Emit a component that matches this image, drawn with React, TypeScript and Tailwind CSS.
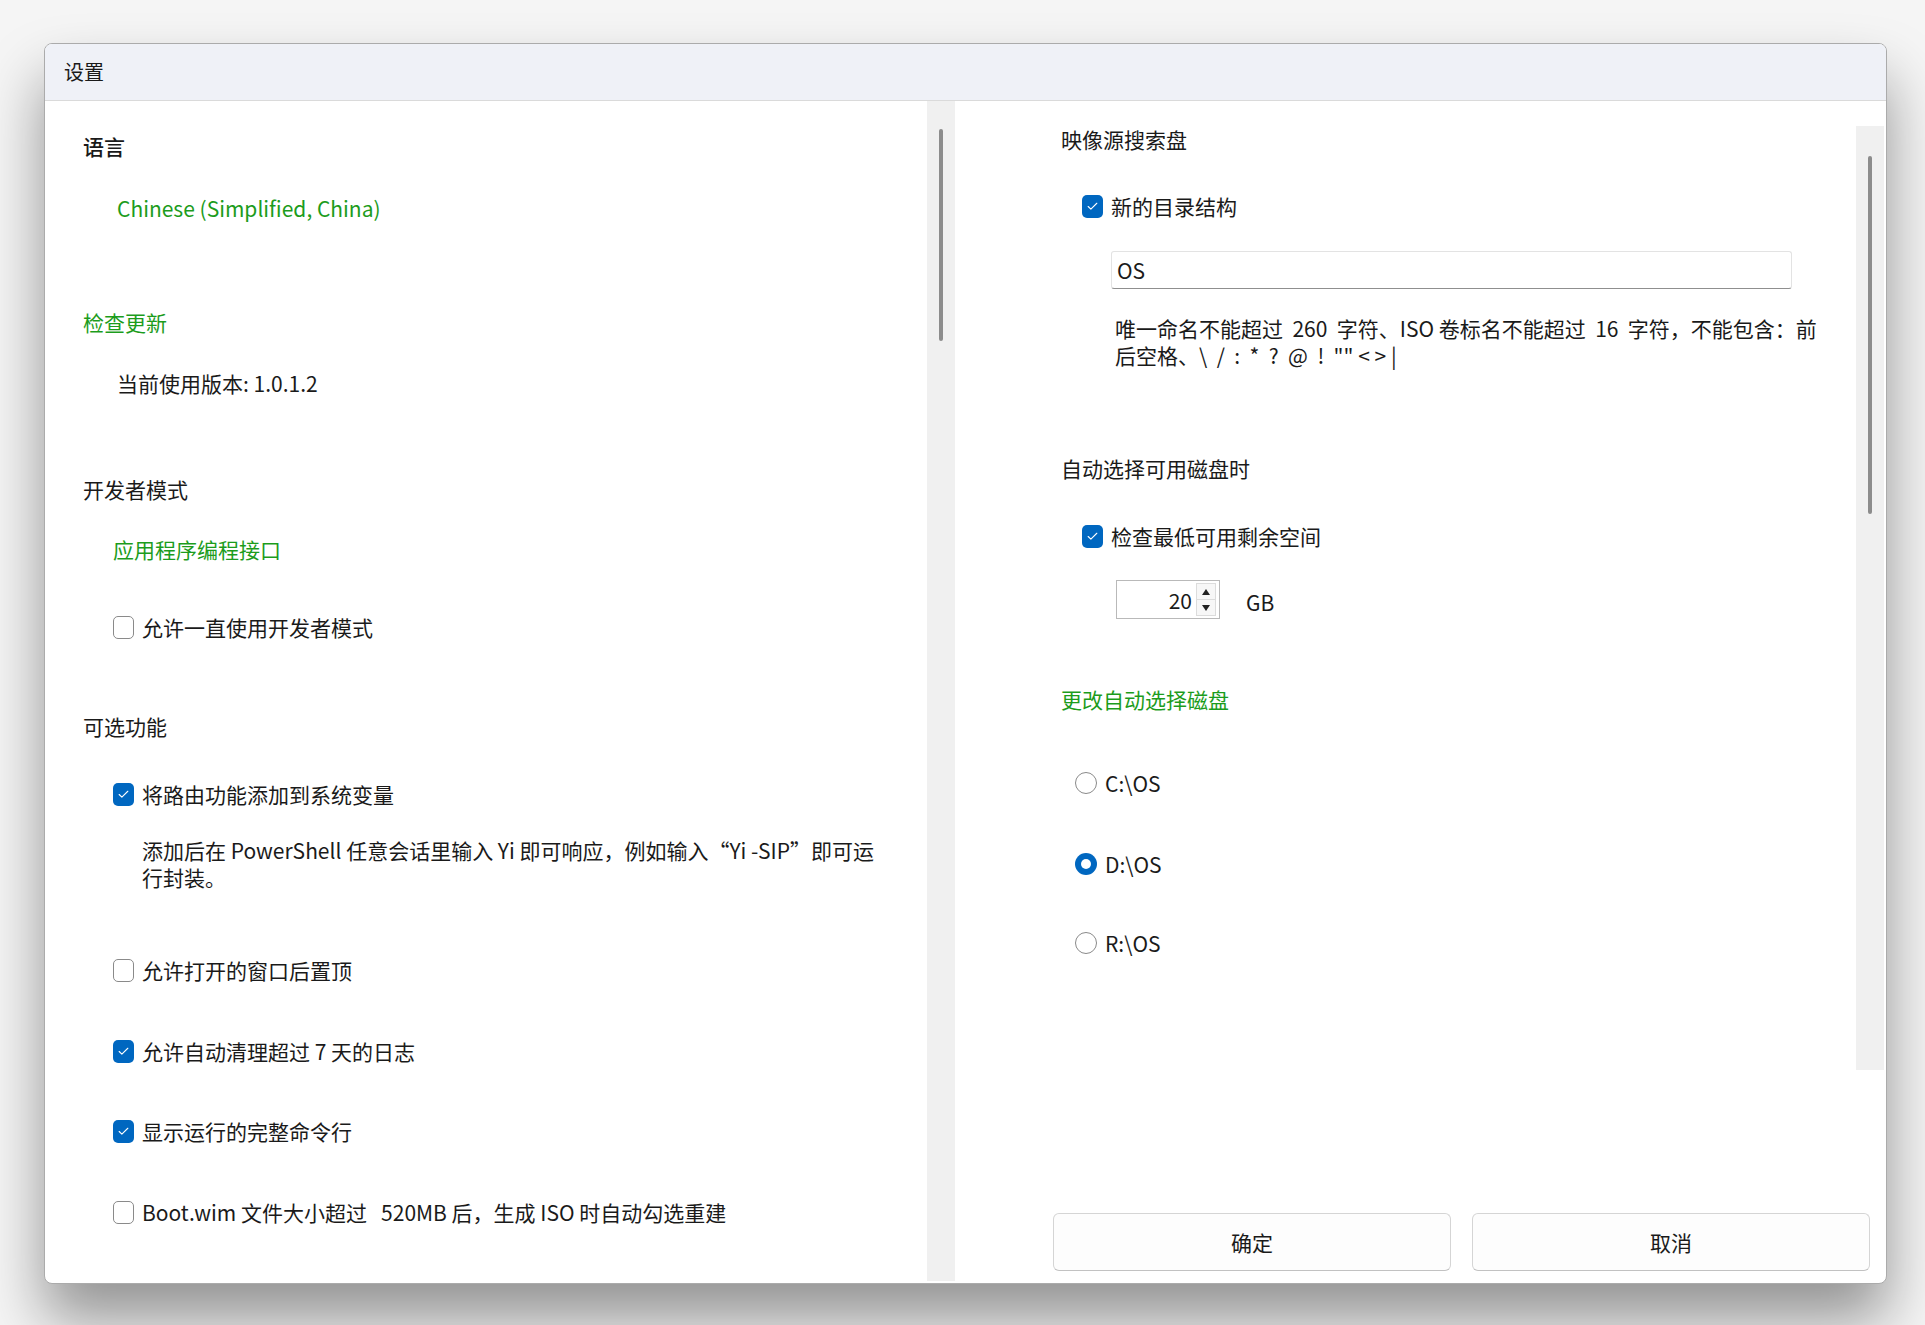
import { Check } from "lucide-react";

const font = { fontFamily: '"Noto Sans CJK SC", "Noto Sans", sans-serif' };

function CheckBox({ checked }: { checked: boolean }) {
  return checked ? (
    <span className="w-[21px] h-[23px] rounded-[5px] bg-[#0067c0] flex items-center justify-center shrink-0">
      <Check className="w-[13px] h-[13px] text-white" strokeWidth={2} />
    </span>
  ) : (
    <span className="w-[21px] h-[23px] rounded-[5px] border-[1.5px] border-[#8a8a8a] bg-white shrink-0" />
  );
}

function CheckRow({ checked, label, className }: { checked: boolean; label: string; className: string }) {
  return (
    <div className={`flex items-center gap-[8px] h-[28px] ${className}`}>
      <CheckBox checked={checked} />
      <span className="whitespace-pre">{label}</span>
    </div>
  );
}

function Radio({ checked, label, className }: { checked: boolean; label: string; className: string }) {
  return (
    <div className={`flex items-center gap-[8px] h-[28px] ${className}`}>
      {checked ? (
        <span className="w-[22px] h-[22px] rounded-full bg-[#0067c0] flex items-center justify-center">
          <span className="w-[10px] h-[10px] rounded-full bg-white" />
        </span>
      ) : (
        <span className="w-[22px] h-[22px] rounded-full border-[1.5px] border-[#8a8a8a] bg-white" />
      )}
      <span>{label}</span>
    </div>
  );
}

export default function App() {
  return (
    <div
      className="w-[1925px] h-[1325px] bg-[#f5f5f5] pl-[44px] pt-[43px] text-[21px] text-[#1a1a1a] leading-[28px]"
      style={font}
    >
      <div className="w-[1843px] h-[1241px] bg-white border border-[#ababab] rounded-[8px] overflow-hidden flex flex-col shadow-[0_36px_60px_rgba(0,0,0,0.4)]">
        <div className="h-[57px] bg-[#eff1f7] border-b border-[#dadada] flex items-center pl-[19px] text-[20px] shrink-0">
          设置
        </div>

        <div className="flex flex-1">
          {/* left column */}
          <div className="w-[882px] pl-[38px] flex flex-col">
            <div className="mt-[31px] h-[28px] font-medium">语言</div>
            <div className="mt-[34px] h-[28px] pl-[34px] text-[#1c9c1c]">Chinese (Simplified, China)</div>
            <div className="mt-[86px] h-[28px] text-[#1c9c1c]">检查更新</div>
            <div className="mt-[33px] h-[28px] pl-[34px]">当前使用版本: 1.0.1.2</div>
            <div className="mt-[78px] h-[28px]">开发者模式</div>
            <div className="mt-[32px] h-[28px] pl-[30px] text-[#1c9c1c]">应用程序编程接口</div>
            <CheckRow className="mt-[50px] pl-[30px]" checked={false} label="允许一直使用开发者模式" />
            <div className="mt-[71px] h-[28px]">可选功能</div>
            <CheckRow className="mt-[40px] pl-[30px]" checked label="将路由功能添加到系统变量" />
            <div className="mt-[29px] pl-[59px] leading-[27px] whitespace-pre">
              {"添加后在 PowerShell 任意会话里输入 Yi 即可响应，例如输入“Yi -SIP”即可运"}
              <br />
              行封装。
            </div>
            <CheckRow className="mt-[65px] pl-[30px]" checked={false} label="允许打开的窗口后置顶" />
            <CheckRow className="mt-[53px] pl-[30px]" checked label="允许自动清理超过 7 天的日志" />
            <CheckRow className="mt-[52px] pl-[30px]" checked label="显示运行的完整命令行" />
            <CheckRow className="mt-[53px] pl-[30px]" checked={false} label="Boot.wim 文件大小超过   520MB 后，生成 ISO 时自动勾选重建" />
          </div>

          {/* left scrollbar */}
          <div className="w-[28px] bg-[#f0f0f0] pt-[28px] mb-[2px] flex justify-center">
            <div className="w-[4px] h-[212px] rounded-full bg-[#8c8c8c]" />
          </div>

          {/* right column */}
          <div className="flex-1 flex flex-col">
            <div className="flex h-[969px]">
              <div className="flex-1 pl-[106px] flex flex-col">
                <div className="mt-[24px] h-[28px]">映像源搜索盘</div>
                <CheckRow className="mt-[39px] pl-[21px]" checked label="新的目录结构" />
                <div className="mt-[31px] ml-[50px] w-[681px] h-[38px] border border-[#e3e3e3] border-b-[#8f8f8f] rounded-[3px] flex items-center pl-[5px]">
                  OS
                </div>
                <div className="mt-[26px] pl-[54px] leading-[27px] whitespace-pre">
                  {"唯一命名不能超过  260  字符、ISO 卷标名不能超过  16  字符，不能包含：前"}
                  <br />
                  {'后空格、\\  /  :  *  ?  @  !  "" < > |'}
                </div>
                <div className="mt-[85px] h-[28px]">自动选择可用磁盘时</div>
                <CheckRow className="mt-[40px] pl-[21px]" checked label="检查最低可用剩余空间" />
                <div className="mt-[30px] pl-[55px] flex items-center">
                  <div className="w-[104px] h-[39px] border border-[#b9b9b9] flex items-center justify-end">
                    <span className="pr-[4px]">20</span>
                    <div className="w-[20px] h-[33px] mr-[3px] flex flex-col border border-[#dcdcdc] bg-[#f7f7f7]">
                      <div className="flex-1 flex items-center justify-center border-b border-[#dcdcdc]">
                        <span className="w-0 h-0 border-l-[4px] border-r-[4px] border-b-[6px] border-l-transparent border-r-transparent border-b-[#222]" />
                      </div>
                      <div className="flex-1 flex items-center justify-center">
                        <span className="w-0 h-0 border-l-[4px] border-r-[4px] border-t-[6px] border-l-transparent border-r-transparent border-t-[#222]" />
                      </div>
                    </div>
                  </div>
                  <span className="ml-[26px] mt-[4px]">GB</span>
                </div>
                <div className="mt-[66px] h-[28px] text-[#1c9c1c]">更改自动选择磁盘</div>
                <Radio className="mt-[56px] pl-[14px]" checked={false} label="C:\OS" />
                <Radio className="mt-[53px] pl-[14px]" checked label="D:\OS" />
                <Radio className="mt-[51px] pl-[14px]" checked={false} label="R:\OS" />
              </div>
              <div className="w-[28px] mr-[2px] mt-[25px] h-[944px] bg-[#f0f0f0] pt-[30px] flex justify-center">
                <div className="w-[4px] h-[358px] rounded-full bg-[#8c8c8c]" />
              </div>
            </div>
            <div className="mt-[143px] pl-[98px] flex gap-[21px]">
              <button className="w-[398px] h-[58px] rounded-[6px] border border-[#d5d5d5] border-b-[#c2c2c2] bg-[#fdfdfd]">
                确定
              </button>
              <button className="w-[398px] h-[58px] rounded-[6px] border border-[#d5d5d5] border-b-[#c2c2c2] bg-[#fdfdfd]">
                取消
              </button>
            </div>
          </div>
        </div>
      </div>
    </div>
  );
}
